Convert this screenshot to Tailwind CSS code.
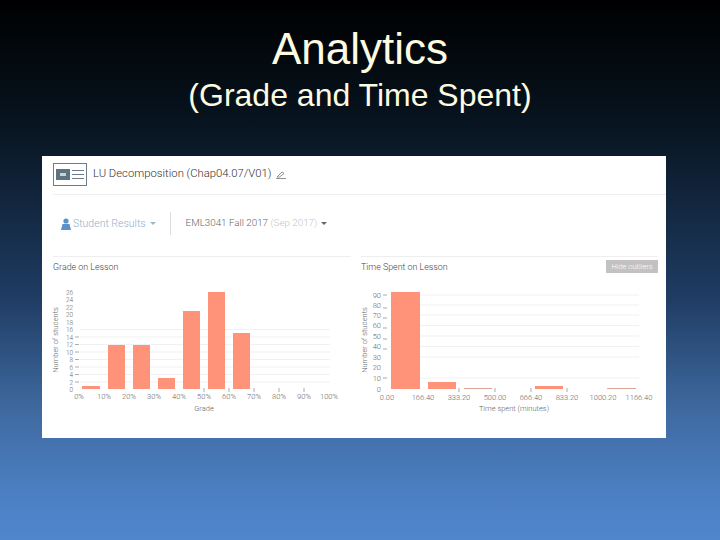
<!DOCTYPE html>
<html><head><meta charset="utf-8"><script src="https://cdn.jsdelivr.net/npm/@tailwindcss/browser@4"></script></head>
<body class="m-0">
<div class="w-[720px] h-[540px] overflow-hidden flex flex-col items-center bg-[linear-gradient(180deg,#000000_0%,#07131e_22%,#1f3c63_55%,#3f6aa0_76%,#4c80c4_92%,#4f86cc_100%)] font-['Liberation_Sans',Arial,sans-serif]">
  <div class="h-[156px] shrink-0 flex flex-col items-center pt-[24px] text-[#fdfbe2]">
    <h1 class="text-[44px] leading-[50px] font-normal">Analytics</h1>
    <p class="text-[32px] leading-[40px] mt-[1px]">(Grade and Time Spent)</p>
  </div>
  <div class="w-[624px] h-[282px] mr-[12px] shrink-0 bg-white flex flex-col font-['Roboto',sans-serif] font-light text-[#555]">
    <div class="h-[29px] mt-[4px] mx-[11px] flex items-center">
      <div class="w-[34px] h-[23px] border border-[#6d7c88] flex items-center justify-center gap-[2px]">
        <div class="w-[14px] h-[11px] bg-[#5f7280] flex items-center justify-center"><div class="w-[6px] h-[3px] bg-[#c9d3da]"></div></div>
        <div class="w-[12px] flex flex-col gap-[3px]"><div class="h-px bg-[#6d7c88]"></div><div class="h-px bg-[#6d7c88]"></div><div class="h-px bg-[#6d7c88]"></div></div>
      </div>
      <span class="ml-[6px] text-[11.3px] text-[#333]">LU Decomposition (Chap04.07/V01)</span>
      <svg class="ml-[4px]" width="10" height="8" viewBox="0 0 10 8"><path d="M1 6 L6 1 L8 2.5 L3.5 6 Z M0 7.5 H10" fill="none" stroke="#777" stroke-width="0.8"/></svg>
    </div>
    <div class="h-px bg-[#eeeeee] ml-[11px] mt-[5px]"></div>
    <div class="h-[61px] flex items-center pl-[19px] pb-[4px]">
      <svg width="10" height="12" viewBox="0 0 10 12"><circle cx="5" cy="3" r="2.6" fill="#5b93c7"/><path d="M0 12 L1.5 6 H8.5 L10 12 Z" fill="#5b93c7"/></svg>
      <span class="ml-[2px] text-[10.5px] text-[#8fb0cc]">Student Results</span>
      <span class="ml-[4px] w-0 h-0 border-x-[3px] border-x-transparent border-t-[3px] border-t-[#9db5c9]"></span>
      <div class="w-px h-[23px] bg-[#dddddd] ml-[14px]"></div>
      <span class="ml-[15px] text-[9.8px] text-[#666]">EML3041 Fall 2017 <span class="text-[#c4c4c4]">(Sep 2017)</span></span>
      <span class="ml-[4px] w-0 h-0 border-x-[3px] border-x-transparent border-t-[3px] border-t-[#666]"></span>
    </div>
    <div class="flex-1 flex gap-[10px] pl-[11px] pr-[8px]">
      <div class="w-[298px] flex flex-col">
        <div class="h-px bg-[#eeeeee]"></div>
        <div class="h-[28px] pt-[4px] text-[8.9px] leading-[12px] text-[#444]">Grade on Lesson</div>
        <svg class="block ml-[-3px]" width="300" height="130" viewBox="50 285 300 130" font-family="Roboto, sans-serif" font-size="8" fill="#666">
          <path d="M80 382H330M80 374.500H330M80 367H330M80 359.500H330M80 352H330M80 344.500H330M80 337H330M80 329.500H330" stroke="#f1f1f1" stroke-width="1"/>
          <g fill="#ff9379">
            <rect x="82" y="386" width="18" height="3"/><rect x="108" y="345" width="17" height="44"/><rect x="133" y="345" width="17" height="44"/><rect x="158" y="378" width="17" height="11"/><rect x="183" y="311" width="17" height="78"/><rect x="208" y="292" width="17" height="97"/><rect x="233" y="333" width="17" height="56"/>
          </g>
          <g text-anchor="end" font-size="6.400">
            <text x="73" y="392">0</text><text x="73" y="384.500">2</text><text x="73" y="377">4</text><text x="73" y="369.500">6</text><text x="73" y="362">8</text><text x="73" y="354.500">10</text><text x="73" y="347">12</text><text x="73" y="339.500">14</text><text x="73" y="332">16</text><text x="73" y="324.500">18</text><text x="73" y="317">20</text><text x="73" y="309.500">22</text><text x="73" y="302">24</text><text x="73" y="294.500">26</text>
          </g>
          <path d="M75 382h4M75 374.500h4M75 367h4M75 359.500h4M75 352h4M75 344.500h4M75 337h4M204 388v4M229 388v4M254 388v4M279 388v4M304 388v4" stroke="#888" stroke-width="0.700"/>
          <g text-anchor="middle" font-size="7.500">
            <text x="79" y="399">0%</text><text x="104" y="399">10%</text><text x="129" y="399">20%</text><text x="154" y="399">30%</text><text x="179" y="399">40%</text><text x="204" y="399">50%</text><text x="229" y="399">60%</text><text x="254" y="399">70%</text><text x="279" y="399">80%</text><text x="304" y="399">90%</text><text x="329" y="399">100%</text>
            <text x="204" y="411">Grade</text>
            <text transform="translate(58 340) rotate(-90)">Number of students</text>
          </g>
        </svg>
      </div>
      <div class="w-[297px] flex flex-col">
        <div class="h-px bg-[#eeeeee]"></div>
        <div class="h-[28px] pt-[3px] flex justify-between items-start text-[8.9px] leading-[12px] text-[#444]">
          <span class="mt-[1px]">Time Spent on Lesson</span>
          <span class="w-[52px] h-[13px] bg-[#c2c2c2] text-white text-[7.500px] leading-[13px] text-center">Hide outliers</span>
        </div>
        <svg class="block ml-[-1px]" width="300" height="130" viewBox="360 285 300 130" font-family="Roboto, sans-serif" font-size="8" fill="#666">
          <path d="M390 378H639M390 357H639M390 346.500H639M390 336H639M390 325.500H639M390 315H639M390 305H639M390 295H639" stroke="#f1f1f1" stroke-width="1"/>
          <g fill="#ff9379">
            <rect x="391" y="292" width="29" height="97"/><rect x="428" y="382" width="28" height="7"/><rect x="535" y="386" width="28" height="3"/>
          </g>
          <g fill="#dca595"><rect x="464" y="388" width="28" height="1"/><rect x="607" y="388" width="29" height="1"/></g>
          <g text-anchor="end" font-size="7.500">
            <text x="381" y="392">0</text><text x="381" y="381">10</text><text x="381" y="370">20</text><text x="381" y="360">30</text><text x="381" y="349">40</text><text x="381" y="339">50</text><text x="381" y="328">60</text><text x="381" y="318">70</text><text x="381" y="308">80</text><text x="381" y="298">90</text>
          </g>
          <path d="M383 378h4M383 349h4M383 339h4M383 328h4M383 318h4M383 308h4M383 295h4M459 388v4M495 388v4M531 388v4M567 388v4" stroke="#888" stroke-width="0.700"/>
          <g text-anchor="middle" font-size="7.500">
            <text x="387" y="400">0.00</text><text x="423" y="400">166.40</text><text x="459" y="400">333.20</text><text x="495" y="400">500.00</text><text x="531" y="400">666.40</text><text x="567" y="400">833.20</text><text x="603" y="400">1000.20</text><text x="639" y="400">1166.40</text>
            <text x="514" y="411">Time spent (minutes)</text>
            <text transform="translate(367 340) rotate(-90)">Number of students</text>
          </g>
        </svg>
      </div>
    </div>
  </div>
</div>
</body></html>
